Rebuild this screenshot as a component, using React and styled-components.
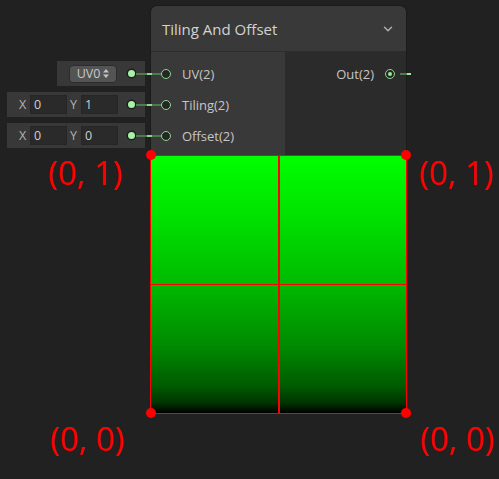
import React from 'react';
import styled, { createGlobalStyle } from 'styled-components';
import { ChevronDown } from 'lucide-react';

const Global = createGlobalStyle`
  html, body {
    margin: 0;
    padding: 0;
    background: #212121;
  }
`;

const Canvas = styled.div`
  position: relative;
  width: 499px;
  height: 479px;
  overflow: hidden;
  background: #212121;
  font-family: 'Open Sans', 'Noto Sans', sans-serif;
  color: #c8c8c8;
`;

const Stage = styled.div`
  display: flex;
  align-items: flex-start;
  padding-top: 6px;
`;

const InputsColumn = styled.div`
  width: 151px;
  box-sizing: border-box;
  padding: 52px 6px 0 0;
  display: flex;
  flex-direction: column;
  align-items: flex-end;
`;

const InputRow = styled.div`
  height: 31px;
  display: flex;
  align-items: center;
`;

const Panel = styled.div`
  height: 25px;
  box-sizing: border-box;
  background: #383838;
  display: flex;
  align-items: center;
  padding: 0 10px 0 12px;
`;

const Dropdown = styled.div`
  width: 48px;
  height: 18px;
  box-sizing: border-box;
  border-radius: 4px;
  background: #545454;
  border: 1px solid #2c2c2c;
  display: flex;
  align-items: center;
  justify-content: center;
  gap: 3px;
  font-size: 12.5px;
  color: #c9c9c9;
`;

const AxisLabel = styled.span`
  width: 11px;
  margin-left: ${(p) => p.$offset || 0}px;
  font-size: 12.5px;
  color: #b4b4b4;
`;

const Field = styled.div`
  width: 37px;
  height: 19px;
  box-sizing: border-box;
  background: #2a2a2a;
  border: 1px solid #262626;
  padding-left: 3px;
  font-size: 12.5px;
  line-height: 17px;
  color: #cfcfcf;
`;

const Knob = styled.span`
  width: 7px;
  height: 7px;
  margin-left: ${(p) => p.$gap}px;
  border-radius: 50%;
  background: #a8f2a8;
  box-shadow: 0 0 0 1.5px #1e1e1e;
`;

const Node = styled.div`
  width: 255px;
  border-radius: 6px;
  box-shadow: 0 0 0 1px #1b1b1b;
`;

const Header = styled.div`
  height: 46px;
  box-sizing: border-box;
  background: #393939;
  border-radius: 6px 6px 0 0;
  border-bottom: 1px solid #2c2c2c;
  display: flex;
  align-items: center;
  justify-content: space-between;
  padding: 0 11px 0 11px;
  font-size: 15px;
  color: #d2d2d2;
`;

const Body = styled.div`
  height: 103px;
  display: flex;
`;

const PortColumn = styled.div`
  box-sizing: border-box;
  padding-top: 6px;
  width: ${(p) => (p.$side === 'in' ? '134px' : 'auto')};
  flex: ${(p) => (p.$side === 'in' ? 'none' : '1')};
  background: ${(p) => (p.$side === 'in' ? '#393939' : '#2b2b2b')};
`;

const PortRow = styled.div`
  position: relative;
  height: 31px;
  display: flex;
  align-items: center;
  justify-content: ${(p) => (p.$side === 'in' ? 'flex-start' : 'flex-end')};
  gap: 11px;
  padding: ${(p) => (p.$side === 'in' ? '0 0 0 10px' : '0 11px 0 0')};
  font-size: 13px;
  color: #c6c6c6;
`;

const Port = styled.span`
  position: relative;
  width: 10px;
  height: 10px;
  box-sizing: border-box;
  border-radius: 50%;
  border: 1.5px solid #8cd88c;
  background: #262626;
  display: flex;
  align-items: center;
  justify-content: center;
  &::after {
    content: '';
    display: ${(p) => (p.$filled ? 'block' : 'none')};
    width: 4px;
    height: 4px;
    border-radius: 50%;
    background: #9be89b;
  }
`;

const InWire = styled.span`
  position: absolute;
  left: -15px;
  top: 50%;
  width: 25px;
  height: 2px;
  margin-top: -1px;
  background: linear-gradient(
    to right,
    #4f7a4f 0 11px,
    #8fd48f 11px 16px,
    #4f7a4f 16px 100%
  );
`;

const OutWire = styled.span`
  position: absolute;
  right: -5px;
  top: 50%;
  width: 11px;
  height: 2px;
  margin-top: -1px;
  background: linear-gradient(to right, #4f7a4f 0 7px, #9be89b 7px 100%);
`;

const Preview = styled.div`
  position: relative;
  height: 258px;
  border-radius: 0 0 5px 5px;
  background: linear-gradient(
    to bottom,
    rgb(0, 255, 0) 0%,
    rgb(0, 224, 0) 25%,
    rgb(0, 186, 0) 50%,
    rgb(0, 136, 0) 75%,
    rgb(0, 89, 0) 90%,
    rgb(0, 52, 0) 96%,
    rgb(0, 0, 0) 100%
  );
`;

const Frame = styled.div`
  position: absolute;
  top: 0;
  bottom: -1px;
  left: -1px;
  right: -1px;
  border: 1.5px solid #ff0000;
`;

const CenterLine = styled.span`
  position: absolute;
  background: #ff0000;
  ${(p) =>
    p.$vertical
      ? 'top: 0; bottom: 0; left: calc(50% - 0.5px); width: 1.5px;'
      : 'left: 0; right: 0; top: 50%; height: 1px;'}
`;

const Corner = styled.span`
  position: absolute;
  width: 10px;
  height: 10px;
  border-radius: 50%;
  background: #ff0000;
  ${(p) => (p.$top ? 'top: -5px;' : 'bottom: -5px;')}
  ${(p) => (p.$left ? 'left: -5px;' : 'right: -5px;')}
`;

const CoordLabel = styled.span`
  position: absolute;
  left: ${(p) => p.$x}px;
  top: ${(p) => p.$y}px;
  font-size: 33px;
  line-height: 33px;
  color: #ff0000;
  white-space: nowrap;
`;

const UpDown = () => (
  <svg width="6" height="9" viewBox="0 0 6 9">
    <path d="M3 0 L6 3.5 H0 Z M3 9 L6 5.5 H0 Z" fill="#c4c4c4" />
  </svg>
);

const vectorInputs = [
  { x: '0', y: '1' },
  { x: '0', y: '0' },
];

const App = () => (
  <Canvas>
    <Global />
    <Stage>
      <InputsColumn>
        <InputRow>
          <Panel>
            <Dropdown>
              UV0
              <UpDown />
            </Dropdown>
            <Knob $gap={11} />
          </Panel>
        </InputRow>
        {vectorInputs.map((v, i) => (
          <InputRow key={i}>
            <Panel>
              <AxisLabel>X</AxisLabel>
              <Field>{v.x}</Field>
              <AxisLabel $offset={3}>Y</AxisLabel>
              <Field>{v.y}</Field>
              <Knob $gap={10} />
            </Panel>
          </InputRow>
        ))}
      </InputsColumn>

      <Node>
        <Header>
          <span>Tiling And Offset</span>
          <ChevronDown size={14} color="#b0b0b0" strokeWidth={2.5} />
        </Header>
        <Body>
          <PortColumn $side="in">
            {['UV(2)', 'Tiling(2)', 'Offset(2)'].map((label) => (
              <PortRow $side="in" key={label}>
                <InWire />
                <Port />
                <span>{label}</span>
              </PortRow>
            ))}
          </PortColumn>
          <PortColumn $side="out">
            <PortRow $side="out">
              <span>Out(2)</span>
              <Port $filled />
              <OutWire />
            </PortRow>
          </PortColumn>
        </Body>
        <Preview>
          <CenterLine $vertical />
          <CenterLine />
          <Frame />
          <Corner $top $left />
          <Corner $top />
          <Corner $left />
          <Corner />
        </Preview>
      </Node>
    </Stage>

    <CoordLabel $x={48} $y={156}>(0, 1)</CoordLabel>
    <CoordLabel $x={419} $y={156}>(0, 1)</CoordLabel>
    <CoordLabel $x={50} $y={422}>(0, 0)</CoordLabel>
    <CoordLabel $x={420} $y={422}>(0, 0)</CoordLabel>
  </Canvas>
);

export default App;
